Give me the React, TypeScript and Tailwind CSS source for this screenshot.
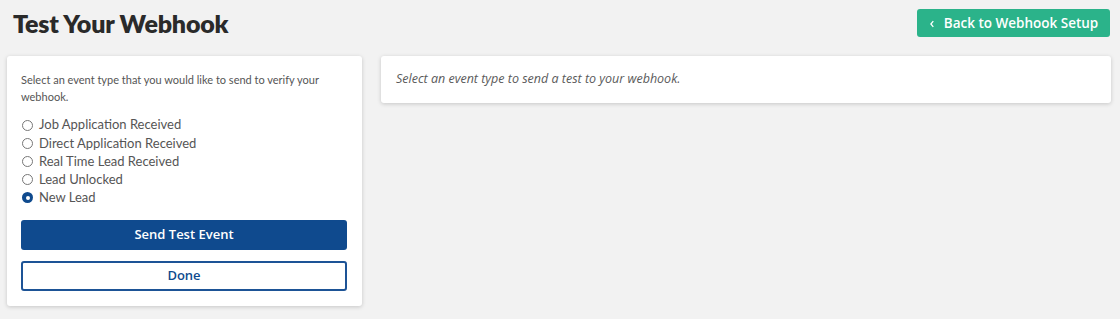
import React, { useState } from "react";

const events = [
  "Job Application Received",
  "Direct Application Received",
  "Real Time Lead Received",
  "Lead Unlocked",
  "New Lead",
];

export default function App() {
  const [sel, setSel] = useState("New Lead");
  return (
    <div className="min-h-[319px] w-[1120px] bg-[#f2f2f2] px-[7px] pt-[9px]" style={{ fontFamily: "'Open Sans', sans-serif" }}>
      <div className="flex items-start justify-between h-[47px]">
        <h1 className="ml-[6px] mt-[-1px] text-[25px] leading-[30px] font-extrabold text-[#2a2a2a] tracking-[-0.2px]" style={{ fontFamily: "Lato, sans-serif" }}>
          Test Your Webhook
        </h1>
        <button className="mr-[3px] flex h-[28px] w-[193px] items-center justify-center gap-[9px] rounded-[3px] bg-[#2bb38a] text-[13.5px] font-semibold text-white">
          <svg width="6" height="8" viewBox="0 0 6 8" className="mt-[1px]">
            <path d="M4.3 1.2 L1.9 4 L4.3 6.8" fill="none" stroke="white" strokeWidth="1.3" />
          </svg>
          Back to Webhook Setup
        </button>
      </div>
      <div className="flex items-start gap-[19px]">
        <div className="w-[355px] rounded-[3px] bg-white px-[14px] pt-[15px] pb-[15px] shadow-[0_1px_4px_rgba(0,0,0,0.18)]">
          <p className="text-[11px] leading-[17px] text-[#555]" style={{ fontFamily: "Lato, sans-serif" }}>
            Select an event type that you would like to send to verify your webhook.
          </p>
          <div className="mt-[11px] flex flex-col" style={{ fontFamily: "Lato, sans-serif" }}>
            {events.map((e) => (
              <label key={e} className="flex h-[18.2px] cursor-pointer items-center gap-[6px] text-[13px] text-[#555]" onClick={() => setSel(e)}>
                <span className={`ml-[1px] flex h-[11px] w-[11px] items-center justify-center rounded-full ${sel === e ? "bg-[#0f4a8e]" : "border border-[#777] bg-white"}`}>
                  {sel === e && <span className="h-[4px] w-[4px] rounded-full bg-white" />}
                </span>
                {e}
              </label>
            ))}
          </div>
          <button className="mt-[13px] h-[30px] w-[326px] rounded-[3px] bg-[#0f4a8e] text-[13px] font-semibold text-white">
            Send Test Event
          </button>
          <button className="mt-[11px] h-[30px] w-[326px] rounded-[3px] border-2 border-[#1d5396] bg-white text-[13px] font-semibold text-[#0f4a8e]">
            Done
          </button>
        </div>
        <div className="flex h-[47px] w-[730px] items-center rounded-[3px] bg-white px-[15px] shadow-[0_1px_4px_rgba(0,0,0,0.18)]">
          <p className="text-[12.5px] italic text-[#5a5a5a]">Select an event type to send a test to your webhook.</p>
        </div>
      </div>
    </div>
  );
}
